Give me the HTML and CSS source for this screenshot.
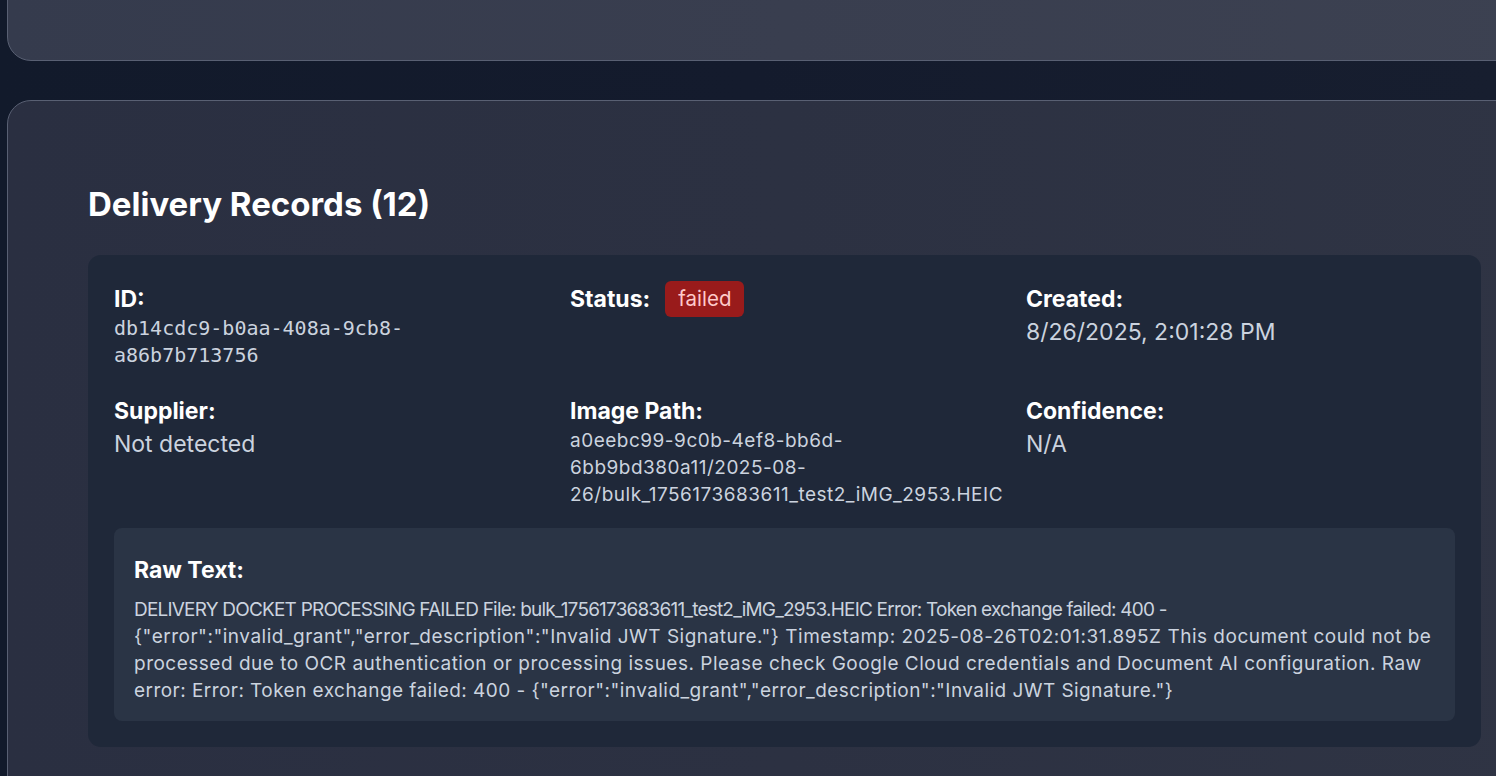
FILE: index.html
```html
<!DOCTYPE html>
<html lang="en">
<head>
<meta charset="utf-8">
<title>Delivery Records</title>
<link rel="stylesheet" href="styles.css">
</head>
<body>
<div class="page">
  <div class="top-card"></div>
  <section class="records-card">
    <h2 class="records-title">Delivery Records (12)</h2>
    <article class="record">
      <div class="record-grid">
        <div class="field">
          <div class="label">ID:</div>
          <div class="value mono">db14cdc9-b0aa-408a-9cb8-a86b7b713756</div>
        </div>
        <div class="field field-inline">
          <div class="label">Status:</div>
          <span class="badge badge-failed">failed</span>
        </div>
        <div class="field">
          <div class="label">Created:</div>
          <div class="value">8/26/2025, 2:01:28 PM</div>
        </div>
        <div class="field">
          <div class="label">Supplier:</div>
          <div class="value">Not detected</div>
        </div>
        <div class="field">
          <div class="label">Image Path:</div>
          <div class="value small">a0eebc99-9c0b-4ef8-bb6d-6bb9bd380a11/2025-08-26/bulk_1756173683611_test2_iMG_2953.HEIC</div>
        </div>
        <div class="field">
          <div class="label">Confidence:</div>
          <div class="value">N/A</div>
        </div>
      </div>
      <div class="raw-box">
        <div class="label raw-label">Raw Text:</div>
        <p class="raw-text"><span class="raw-line raw-line-tight">DELIVERY DOCKET PROCESSING FAILED File: bulk_1756173683611_test2_iMG_2953.HEIC Error: Token exchange failed: 400 -</span> <span class="raw-line raw-line-loose">{"error":"invalid_grant","error_description":"Invalid JWT Signature."} Timestamp: 2025-08-26T02:01:31.895Z This document could not be</span> <span class="raw-line raw-line-loose">processed due to OCR authentication or processing issues. Please check Google Cloud credentials and Document AI configuration. Raw</span> <span class="raw-line raw-line-mid">error: Error: Token exchange failed: 400 - {"error":"invalid_grant","error_description":"Invalid JWT Signature."}</span></p>
      </div>
    </article>
  </section>
</div>
</body>
</html>
```
FILE: styles.css
```css
html, body {
  margin: 0;
  padding: 0;
}

body {
  background: linear-gradient(90deg, #121a2b 0%, #141b2d 50%, #171e2f 100%);
  font-family: Inter, "Noto Sans", "Liberation Sans", sans-serif;
  color: #ffffff;
  overflow: hidden;
  height: 776px;
}

.page {
  width: 1562px;
  padding-left: 7px;
  box-sizing: border-box;
}

.top-card {
  margin-top: -40px;
  height: 101px;
  box-sizing: border-box;
  border: 1px solid #596073;
  border-radius: 24px;
  background: linear-gradient(90deg, #353b4d 0%, #393e4f 50%, #3c4151 100%);
}

.records-card {
  margin-top: 39px;
  border: 1px solid #596073;
  border-radius: 24px;
  padding: 80px;
  background: linear-gradient(90deg, #2a2f41 0%, #2c3142 50%, #2f3444 100%);
  min-height: 800px;
}

.records-title {
  margin: 0 0 28px;
  font-size: 33px;
  line-height: 46px;
  font-weight: 700;
  color: #ffffff;
}

.record {
  background: #1f2839;
  border-radius: 13px;
  padding: 28px 26px 26px;
}

.record-grid {
  display: grid;
  grid-template-columns: repeat(3, minmax(0, 1fr));
  column-gap: 27px;
  row-gap: 26px;
}

.field-inline {
  display: flex;
  align-items: center;
  align-self: start;
  margin-top: -2px;
}

.label {
  font-size: 23px;
  line-height: 33px;
  font-weight: 700;
  color: #ffffff;
}

.value {
  font-size: 23px;
  line-height: 33px;
  color: #cbd3df;
}

.value.mono {
  margin-top: -1px;
  font-family: "DejaVu Sans Mono", "Liberation Mono", monospace;
  font-size: 20px;
  line-height: 27px;
}

.value.small {
  margin-top: -1px;
  font-size: 19px;
  line-height: 27px;
  letter-spacing: 0.5px;
  white-space: normal;
}

.badge {
  margin-left: 15px;
  padding: 4px 13px;
  font-size: 20.5px;
  line-height: 28px;
  border-radius: 6px;
}

.badge-failed {
  background: #991b1b;
  color: #fecaca;
}

.raw-box {
  margin-top: 20px;
  background: #2a3445;
  border-radius: 8px;
  padding: 26px 20px 17px;
}

.raw-label {
  margin-bottom: 9px;
}

.raw-text {
  margin: 0;
  font-size: 19px;
  line-height: 27px;
  color: #cbd3df;
}

.raw-line {
  display: block;
  white-space: nowrap;
}

.raw-line-tight {
  letter-spacing: -0.8px;
}

.raw-line-loose {
  letter-spacing: 0.5px;
}

.raw-line-mid {
  letter-spacing: 0.45px;
}
```
